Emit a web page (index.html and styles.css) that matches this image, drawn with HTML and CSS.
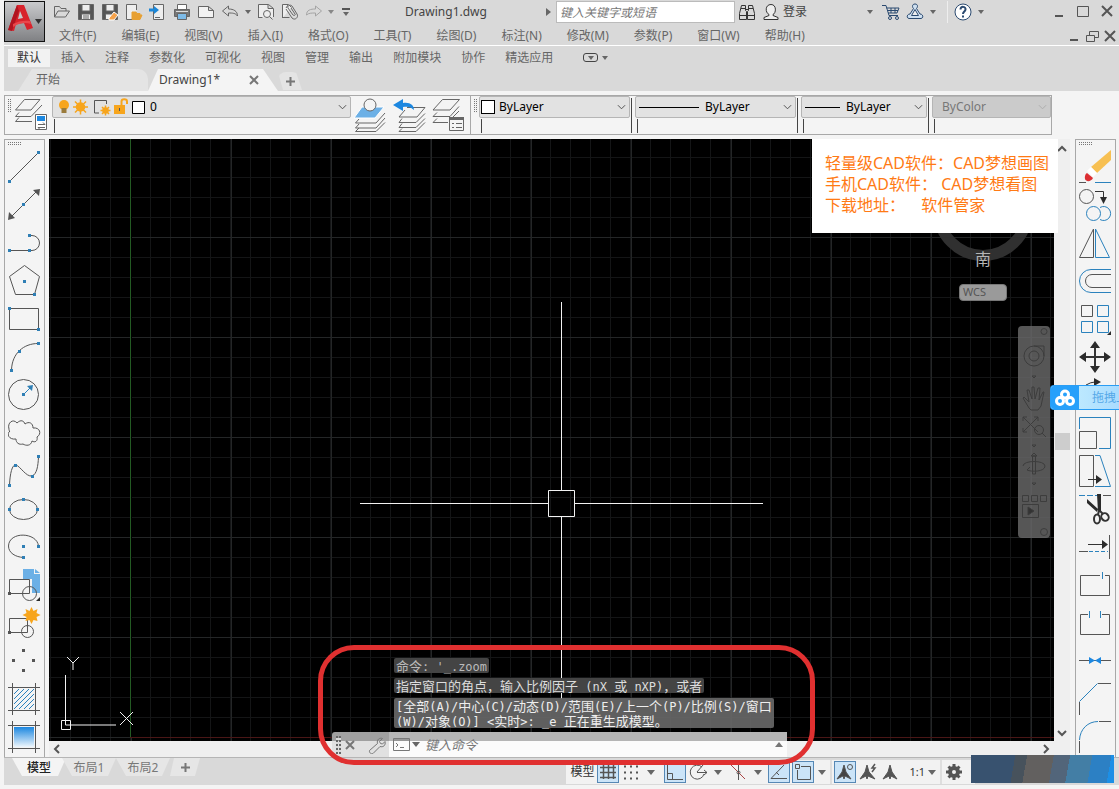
FILE: index.html
```html
<!DOCTYPE html>
<html lang="zh-CN">
<head>
<meta charset="utf-8">
<title>Drawing1.dwg</title>
<link rel="stylesheet" href="styles.css">
</head>
<body>
<div class="app">
  <header class="header">
    <button class="logo" aria-label="应用程序菜单">
      <svg width="39" height="39" viewBox="0 0 39 39"><path d="M3 28 12 3h7l9 23-6 2-3-7-8 1-2 7z" fill="#d8232c"/><path d="m13 17 2-8 3 7z" fill="#c9cacc"/><path d="M3 28 12 3l2 6-7 20z" fill="#b01520"/><path d="M8 22c5-3 12-4 17-3l1 3c-6-2-12-1-18 3z" fill="#e9474b"/><path d="M30 17h7l-3.500 5z" fill="#333"/></svg>
    </button>
    <div class="header-rows">
      <div class="title-row">
        <button class="qa" aria-label="打开"><svg viewBox="0 0 24 24"><path d="M4.500 17V6.500h5l1.500 2h5V11M4.500 17l3.500-6h11.500l-4 6z"/></svg></button>
        <button class="qa" aria-label="保存"><svg viewBox="0 0 24 24"><path d="M4.500 4.500h15v15h-15z" fill="#555"/><path d="M8 4.500h8V11H8zM7.500 14h9v5.500h-9z" fill="#eee"/><path d="M9 16h6M9 18h6"/></svg></button>
        <button class="qa" aria-label="另存为"><svg viewBox="0 0 24 24"><path d="M4.500 4.500h15v15h-15z" fill="#555"/><path d="M8 4.500h8V11H8zM7.500 14h6v5.500h-6z" fill="#eee"/><path d="m11 18 5-6 4 3-4 5h-5z" fill="#f6a24a" stroke="#fff"/></svg></button>
        <button class="qa" aria-label="从移动设备打开"><svg viewBox="0 0 24 24"><path d="M14.500 10V4.500h-10v15h6" fill="#eee"/><path d="M10 18v-6h4l1 1.500h3V15h2l-2 4.500h-8z" fill="#e7a032" stroke="#e7a032"/></svg></button>
        <button class="qa" aria-label="保存到移动设备"><svg viewBox="0 0 24 24"><path d="M7.500 4.500h10v15h-10z" fill="#eee"/><path d="M3 8.500h5V6l5 4-5 4v-2.500H3z" fill="#1c87d8" stroke="none"/><path d="M9 17.500h5"/></svg></button>
        <button class="qa" aria-label="打印"><svg viewBox="0 0 24 24"><path d="M7.500 4.500h9v5h-9z" fill="#fff"/><path d="M4.500 9.500h15v7h-15z" fill="#777"/><path d="M6 11.500h12" stroke="#ddd"/><path d="M7.500 13.500h9v6h-9z" fill="#7dbbe8"/></svg></button>
        <button class="qa" aria-label="新建"><svg viewBox="0 0 24 24"><path d="M4.500 6.500h10l5 4v7h-15zM14.500 6.500v4h5" fill="#f2f2f2"/></svg></button>
        <button class="qa" aria-label="放弃"><svg viewBox="0 0 24 24"><path d="m4.500 11 6-5v3c5 0 9 2 9 7-2-3-5-3-9-3v3z"/></svg></button>
        <i class="caret"></i>
        <button class="qa" aria-label="打印预览"><svg viewBox="0 0 24 24"><path d="M4.500 18V4.500h10l5 4V17M4.500 17.500h4M14 4.500v4h5" fill="#eee"/><circle cx="13" cy="14" r="3.500"/><path d="m15.500 16.500 3 3"/></svg></button>
        <button class="qa" aria-label="修订"><svg viewBox="0 0 24 24"><path d="M4.500 18V4.500h6l3 3M4.500 17.500h7M10 5l-2 3" fill="#eee"/><path d="m8 9 6 9c3 3 7-1 5-4l-5-8c-2-2-5 0-4 2l5 7c1 1 3 0 2-1l-4-6"/></svg></button>
        <button class="qa faded" aria-label="重做"><svg viewBox="0 0 24 24"><path d="m19.500 11-6-5v3c-5 0-9 1-9 6 2-2 5-2 9-2v3z"/></svg></button>
        <i class="caret pale"></i>
        <button class="more" aria-label="自定义"><span></span><i class="caret"></i></button>
        <h1 class="title">Drawing1.dwg</h1>
        <i class="play"></i>
        <input class="search" type="text" aria-label="搜索" placeholder="键入关键字或短语">
        <button class="qa" aria-label="查找"><svg viewBox="0 0 24 24" class="dark"><path d="M6.500 5.500h4v5l1 1v8h-7v-6zM17.500 5.500h-4v5l-1 1v8h7v-6zM4.500 15.500h7M12.500 15.500h7M10.500 9.500h3M6 8.500h4M14 8.500h4"/></svg></button>
        <button class="login"><svg viewBox="0 0 24 24" class="dark"><path d="M12 4.500c6 0 5 9 2 10v1l5 2v2H5v-2l5-2v-1c-4-2-4-10 2-10z" fill="#eee"/></svg>登录</button>
        <i class="caret login-caret"></i>
        <button class="qa" aria-label="商店"><svg viewBox="0 0 24 24" class="navy"><path d="M3 5.500h4l3 10h9M7.500 8H20l-2 5H9M8 10.500h11M12 8v5M16 8v5"/><circle cx="11" cy="18" r="1.500"/><circle cx="18" cy="18" r="1.500"/></svg></button>
        <button class="qa" aria-label="应用"><svg viewBox="0 0 24 24" class="navy"><path d="M12 4c3 0 3 3 1.500 4.500L17 14c3 0 4 4 1 4.500H6c-3-.5-2-4.500 1-4.500l3.500-5.500C9 7 9 4 12 4z" fill="#cfe0f0"/><path d="m12 9.500 3.500 6h-7z" fill="#eee"/></svg></button>
        <i class="caret"></i>
        <span class="divider"></span>
        <button class="qa" aria-label="帮助"><svg viewBox="0 0 24 24" class="navy"><circle cx="12" cy="12" r="8" fill="#fff"/><path d="M9.500 9.500c0-4 5.500-3 5 0-.3 2-2.500 2-2.500 4.500M12 15.500v2" stroke-width="2"/></svg></button>
        <i class="caret"></i>
        <div class="window-buttons">
          <button aria-label="最小化"><svg viewBox="0 0 24 24"><path d="M8 16h8" stroke-width="2"/></svg></button>
          <button aria-label="最大化"><svg viewBox="0 0 24 24"><path d="M6.500 6.500h11v10h-11z"/></svg></button>
          <button aria-label="关闭"><svg viewBox="0 0 24 24"><path d="m7 6 10 10M17 6 7 16" stroke-width="2"/></svg></button>
        </div>
      </div>
      <nav class="menu-row">
        <a href="#">文件(F)</a><a href="#">编辑(E)</a><a href="#">视图(V)</a><a href="#">插入(I)</a><a href="#">格式(O)</a><a href="#">工具(T)</a><a href="#">绘图(D)</a><a href="#">标注(N)</a><a href="#">修改(M)</a><a href="#">参数(P)</a><a href="#">窗口(W)</a><a href="#">帮助(H)</a>
        <div class="doc-buttons">
          <button aria-label="最小化图形"><svg viewBox="0 0 18 20"><path d="M5 14h8" stroke-width="2"/></svg></button>
          <button aria-label="还原图形"><svg viewBox="0 0 18 20"><path d="M6.500 9V5.500h9v6H12M3.500 9.500h8v6h-8z"/></svg></button>
          <button aria-label="关闭图形"><svg viewBox="0 0 18 20"><path d="m4 5 10 10M14 5 4 15" stroke-width="2"/></svg></button>
        </div>
      </nav>
    </div>
  </header>

  <nav class="ribbon">
    <button class="active">默认</button><button>插入</button><button>注释</button><button>参数化</button><button>可视化</button><button>视图</button><button>管理</button><button>输出</button><button>附加模块</button><button>协作</button><button>精选应用</button>
    <button class="collapse" aria-label="最小化功能区"><span class="pill"><i class="caret"></i></span><i class="caret"></i></button>
  </nav>

  <div class="file-tabs">
    <button class="file-tab start">开始</button>
    <button class="file-tab current">Drawing1*<svg width="10" height="10" viewBox="0 0 10 10"><path d="m1 1 8 8M9 1 1 9" stroke="#777" stroke-width="2"/></svg></button>
    <button class="file-tab add" aria-label="新图形"><svg width="9" height="9" viewBox="0 0 9 9"><path d="M4.500 0v9M0 4.500h9" stroke="#777" stroke-width="2"/></svg></button>
  </div>

  <div class="toolbars">
    <section class="toolbar layers">
      <i class="grip-v"></i>
      <button class="layer-btn first" aria-label="图层特性"><svg viewBox="0 0 34 38"><path d="M10.500 3.500H26L17 14H1.500zM5 16.500l-3.500 4H17L28 9M5 21.500l-3.500 4H18"/><path d="M21.500 18.500h11v15h-11z" fill="#fff"/><path d="M23 20h8v5h-8z" fill="#1c87e0" stroke="none"/><path d="M24 28.500h7l-2-2M31 31.500h-7l2 2"/></svg></button>
      <label class="combo layer-combo">
        <svg class="layer-icons" viewBox="0 0 94 22"><circle cx="11" cy="9" r="5" fill="#f7a51c"/><path d="M8.500 12h5v5h-5z" fill="#9a7b3c"/><g stroke="#f7a51c" stroke-width="1.500"><circle cx="27.500" cy="11" r="4" fill="#f7a51c"/><path d="M27.500 3.500v15M20 11h15M22 5.500l11 11M33 5.500l-11 11"/></g><path d="M41.500 8V4.500H45M41.500 12v5H46M50 4.500h3.500V8M44 4.500h6M41.500 8v5" fill="none" stroke="#555"/><g stroke="#f7a51c" stroke-width="1.500"><circle cx="52.500" cy="14.500" r="2.500" fill="#f7a51c"/><path d="M52.500 9.500v10M47.500 14.500h10M49 11l7 7M56 11l-7 7"/></g><path d="M61 9h11v9H61z" fill="#f7a51c"/><path d="M68.500 9V5.500c0-3 5.500-3 5.500 0V8" fill="none" stroke="#f7a51c" stroke-width="2"/><path d="M66.500 12v3" stroke="#555"/><path d="M79.500 5.500h12v12h-12z" fill="#fff" stroke="#000"/></svg>
        <select aria-label="图层"><option>0</option></select>
        <svg class="chev" viewBox="0 0 10 6"><path d="m1 1 4 4 4-4"/></svg>
      </label>
      <button class="layer-btn" aria-label="置为当前"><svg viewBox="0 0 34 38"><path d="M9 11h22l-9 11H1z" fill="#6cb0e6" stroke="#fff"/><circle cx="17" cy="9" r="6" fill="#f4f4f4"/><path d="m6 23-3.500 4H23l9-10M6 28l-3.500 4H23l9-10M6 32l-3.500 3.500H23l9-9"/></svg></button>
      <button class="layer-btn" aria-label="上一个图层"><svg viewBox="0 0 34 38"><path d="M15 11.500h18L25 21H7l6-7M10 22.500l-3 4h17l9-9M10 27.500l-3 4h17l9-9M10 32.500l-3 3h17l9-9"/><path d="m1 9 10-6v4c7-1 11 2 11 7-3-3-6-4-11-3v4z" fill="#1c87e0" stroke="none"/></svg></button>
      <button class="layer-btn" aria-label="图层状态"><svg viewBox="0 0 34 38"><path d="M11.500 3.500h17L19 14H2zM6 16.500l-4 4h17l9-10M6 22.500l-4 4h15M28 15l-6 6"/><path d="M18.500 21.500h14v13h-14z" fill="#f4f4f4"/><path d="M18 22.500h15" stroke-width="3"/><path d="M21 27.500h2M25 27.500h6M21 31.500h2M25 31.500h6"/></svg></button>
    </section>
    <section class="toolbar props">
      <i class="grip-v"></i>
      <label class="combo color"><i class="swatch"></i><select aria-label="颜色"><option>ByLayer</option></select><svg class="chev" viewBox="0 0 10 6"><path d="m1 1 4 4 4-4"/></svg></label>
      <i class="bar"></i>
      <label class="combo linetype"><i class="stroke long"></i><select aria-label="线型"><option>ByLayer</option></select><svg class="chev" viewBox="0 0 10 6"><path d="m1 1 4 4 4-4"/></svg></label>
      <i class="bar"></i>
      <label class="combo weight"><i class="stroke"></i><select aria-label="线宽"><option>ByLayer</option></select><svg class="chev" viewBox="0 0 10 6"><path d="m1 1 4 4 4-4"/></svg></label>
      <i class="bar"></i>
      <label class="combo plot disabled"><select aria-label="打印样式" disabled><option>ByColor</option></select><svg class="chev" viewBox="0 0 10 6"><path d="m1 1 4 4 4-4"/></svg></label>
    </section>
  </div>

  <main class="main">
    <aside class="palette">
      <i class="grip-h"></i>
      <button aria-label="直线"><svg viewBox="0 0 33 38"><path d="M2 33 30 5"/><path class="pt" d="M0 32h3v3H0zM29 3h3v3h-3z"/></svg></button>
      <button aria-label="构造线"><svg viewBox="0 0 33 38"><path d="M3 31 28 6"/><path class="solid" d="m0 34 1-8 6 6zM32 3l-1 7-6-6z"/><path class="pt" d="M14 17h3v3h-3z"/></svg></button>
      <button aria-label="多段线"><svg viewBox="0 0 33 38"><path d="M2 26.500h22a7.500 7.500 0 0 0 0-15h-3"/><path class="pt" d="M0 25h3v3H0zM20 25h3v3h-3zM20 10h3v3h-3z"/></svg></button>
      <button aria-label="多边形"><svg viewBox="0 0 33 38"><path d="m16.500 3.500 15 11-5 18h-19l-6-18z"/><path class="pt" d="M15 18h3v3h-3zM25 31h3v3h-3z"/></svg></button>
      <button aria-label="矩形"><svg viewBox="0 0 33 38"><path d="M1.500 8.500h29v21h-29z"/><path class="pt" d="M0 7h3v3H0zM29 28h3v3h-3z"/></svg></button>
      <button aria-label="圆弧"><svg viewBox="0 0 33 38"><path d="M30 5.500C16 5.500 4 15 3.500 32"/><path class="pt" d="M29 4h3v3h-3zM10 12h3v3h-3zM2 31h3v3H2z"/></svg></button>
      <button aria-label="圆"><svg viewBox="0 0 33 38"><circle cx="15.500" cy="18.500" r="15"/><path d="m15 19 8-8" class="blue"/><path class="pt" d="M14 17h3v3h-3zM25 9l-1 6-5-5z"/></svg></button>
      <button aria-label="修订云线"><svg viewBox="0 0 33 38"><path d="M1 15C-1 9 5 4 9 9c4-4 7-2 8 1 4-3 8-1 8 4 7-1 9 6 4 9 1 4-2 6-5 4-1 5-6 5-9 3-4 1-7-1-7-5-7 1-10-5-6-8-1 0-1-1-1-2z"/></svg></button>
      <button aria-label="样条曲线"><svg viewBox="0 0 33 38"><path d="M1.500 33C2 22 4 12 8 13s10 12 16 11c5-2 6-10 6.500-19"/><path class="pt" d="M0 32h3v3H0zM6 12h3v3H6zM23 23h3v3h-3zM29 3h3v3h-3z"/></svg></button>
      <button aria-label="椭圆"><svg viewBox="0 0 33 38"><ellipse cx="15.500" cy="19.500" rx="14" ry="10"/><path class="pt" d="M14 8h3v3h-3zM0 18h3v3H0zM28 18h3v3h-3z"/></svg></button>
      <button aria-label="椭圆弧"><svg viewBox="0 0 33 38"><path d="M30.500 18C29 4 1 3 .5 18c0 7 7 11 15 11.500"/><path class="pt" d="M14 17h3v3h-3zM29 17h3v3h-3zM14 28h3v3h-3z"/></svg></button>
      <button aria-label="插入块"><svg viewBox="0 0 33 38"><path d="M15 3h11v5h6v19h-8V13h-9z" fill="#6cb0e6" stroke="none"/><path d="M27 3v4h5z" fill="#6cb0e6" stroke="none"/><path d="M1.500 13.500h20v14h-20z"/><circle cx="21.500" cy="27.500" r="7"/><path class="ink" d="M32 31v4h-4z"/><path class="solid" d="M0 26h3v3H0z"/></svg></button>
      <button aria-label="创建块"><svg viewBox="0 0 33 38"><path d="M1.500 14.500h18v14h-18z"/><circle cx="19.500" cy="27.500" r="6"/><path d="m23.500 3 2 4 4-2-1 4 4 2-4 2 1 4-4-1-2 4-2-4-4 1 1-4-4-2 4-2-1-4 4 2z" fill="#f7a51c" stroke="none"/><path class="solid" d="M0 27h3v3H0z"/></svg></button>
      <button aria-label="点"><svg viewBox="0 0 33 38"><path class="solid" d="M14 7h3v3h-3zM4 17h3v3H4zM24 17h3v3h-3zM14 27h3v3h-3z"/></svg></button>
      <button aria-label="图案填充"><svg viewBox="0 0 33 38"><path d="M4.500 3v32M27.500 3v32M0 7.500h32M0 30.500h32"/><path class="blue" d="m6 14 5-5M6 19 16 9M6 24 21 9M6 29 26 9M11 29l15-15M16 29l10-10M21 29l5-5"/></svg></button>
      <button aria-label="渐变色"><svg viewBox="0 0 33 38"><defs><linearGradient id="sky" x2="0" y2="1"><stop stop-color="#1c87e0"/><stop offset="1" stop-color="#eef6fc"/></linearGradient></defs><path d="M6 9h20v20H6z" fill="url(#sky)" stroke="none"/><path d="M4.500 3v32M27.500 3v32M0 7.500h32M0 30.500h32"/></svg></button>
    </aside>

    <div class="viewport">
      <div class="canvas">
        <div class="axis-y"></div>
        <div class="axis-x"></div>
        <svg class="crosshair" width="404" height="397" viewBox="0 0 404 397"><path d="M201.500 0v188M201.500 215v182M0 201.500h188M215 201.500h188M188.500 188.500h26v26h-26z"/></svg>
        <svg class="ucs" width="76" height="78" viewBox="0 0 76 78"><path d="M4.500 19v50H55M.5 64.500h9v9h-9z"/><path d="m6 1 6 6 6-6M12 7v7M59 56l13 13M72 56 59 69"/></svg>
        <div class="compass"><svg width="104" height="104" viewBox="0 0 104 104"><circle cx="52" cy="52" r="44.500"/></svg></div>
        <div class="south">南</div>
        <button class="wcs">WCS</button>
        <div class="navbar"><svg viewBox="0 0 32 212"><circle cx="26" cy="5.500" r="3"/><circle cx="16" cy="30" r="10"/><circle cx="16" cy="30" r="5"/><path d="M16 20h10v10M14 50h4l-2 2zM11 82l-6-10 1-1 5 5-2-12h2l3 9V61h2l1 12 3-11h2l-1 12 4-8h1l-3 14-3 4h-7zM5 91l15 15M20 91 5 106M5 95v-4h4M16 91h4v4M5 102v4h4M14 119h4l-2 2z"/><circle cx="21" cy="104" r="4.500"/><path d="m24 107 4 4M14.500 130h3v18h-3zM5 140c0-6 22-6 22 0s-14 6-18 4l3-3M16 127l3 3h-6zM14 157h4l-2 2zM4.500 169.500h6v6h-6zM13.500 169.500h6v6h-6zM22.500 169.500h6v6h-6zM4.500 178.500h16v13h-16z"/><path d="m10 181 6 4-6 4z" fill="#333"/><circle cx="26" cy="206" r="3.500"/></svg></div>
        <div class="history">
          <p class="h1">命令<span>: '_.zoom</span></p>
          <p class="h2">指定窗口的角点，输入比例因子<span> (nX </span>或<span> nXP)</span>，或者</p>
          <p class="h3"><span>[</span>全部<span>(A)/</span>中心<span>(C)/</span>动态<span>(D)/</span>范围<span>(E)/</span>上一个<span>(P)/</span>比例<span>(S)/</span>窗口<br><span>(W)/</span>对象<span>(O)] &lt;</span>实时<span>&gt;: _e </span>正在重生成模型。</p>
        </div>
      </div>
      <div class="scroll-v"><svg viewBox="0 0 10 8"><path d="m1 6 4-4 4 4"/></svg><i class="thumb"></i><svg viewBox="0 0 10 8"><path d="m1 2 4 4 4-4"/></svg></div>
      <div class="scroll-h"><svg viewBox="0 0 8 10"><path d="M6 1 2 5l4 4"/></svg><svg viewBox="0 0 8 10"><path d="m2 1 4 4-4 4"/></svg></div>
      <div class="notice">
        <p>轻量级CAD软件：CAD梦想画图</p>
        <p>手机CAD软件： CAD梦想看图</p>
        <p>下载地址：　&nbsp;&nbsp;软件管家</p>
      </div>
      <div class="command">
        <i class="grip-v"></i>
        <button aria-label="关闭命令行"><svg width="12" height="12" viewBox="0 0 12 12"><path d="m2 2 8 8M10 2l-8 8" stroke-width="2"/></svg></button>
        <button aria-label="自定义"><svg width="18" height="18" viewBox="0 0 18 18"><path d="m1.500 14.500 8-7c-1-4 2-6 5-5l-3 3 1 2 2 .500 2.500-2.500c1 4-2 6-5 5l-7 7c-2 1-4-1-3.500-3z"/></svg></button>
        <label class="prompt"><svg width="17" height="13" viewBox="0 0 17 13"><path d="M.5.500h16v12H.5zM.5 2h16M3 5l2 2-2 2M7 9.500h4"/></svg><i class="caret"></i><input type="text" aria-label="命令" placeholder="键入命令"></label>
        <i class="up"></i>
      </div>
      <div class="highlight"></div>
    </div>

    <aside class="palette modify">
      <i class="grip-h"></i>
      <button aria-label="删除"><svg viewBox="0 0 33 38"><path d="M32 2v10L18 25l-6-6z" fill="#f7c052" stroke="none"/><path d="m12 19 6 6-4 4-6-6z" fill="#fff" stroke="none"/><path d="m8 25 6 5c-2 4-7 4-8 1-.5-2 0-5 2-6z" fill="#dc2f33" stroke="none"/><path d="M0 34.500h7"/><path class="blue" d="M16 34.500h16"/></svg></button>
      <button aria-label="复制"><svg viewBox="0 0 33 38"><circle cx="7.500" cy="10.500" r="7"/><path class="dark" d="M16 5.500h8.500V12"/><path class="ink" d="M21 11h7l-3.500 7z"/><circle class="blue" cx="14.500" cy="27.500" r="7"/><path class="blue" d="M21 21.500a7 7 0 1 1 0 12"/></svg></button>
      <button aria-label="镜像"><svg viewBox="0 0 33 38"><path d="M14.500 5v28.500H.5z"/><path class="blue" d="M16.500 5v28.500h14z"/></svg></button>
      <button aria-label="偏移"><svg viewBox="0 0 33 38"><path class="blue" d="M32 7.500H12a11.500 11.500 0 0 0 0 23h20"/><path d="M32 12.500H13a6.500 6.500 0 0 0 0 13h19"/></svg></button>
      <button aria-label="阵列"><svg viewBox="0 0 33 38"><path d="M2.500 5.500h11v11h-11z"/><path class="blue" d="M18.500 5.500h11v11h-11zM2.500 21.500h11v11h-11zM18.500 21.500h11v11h-11z"/><path class="ink" d="M32 31v4h-4z"/></svg></button>
      <button aria-label="移动"><svg viewBox="0 0 33 38"><path d="M2 19h28M16 5v28" stroke="#333" stroke-width="2"/><path class="ink" d="m16 3 5 7H11zM16 35l5-7H11zM0 19l7-5v10zM32 19l-7-5v10z"/></svg></button>
      <button aria-label="旋转"><svg viewBox="0 0 33 38"><path class="dark" d="M7 9q5-3 9-3"/><path class="ink" d="m15 2 7 4-7 4z"/></svg></button>
      <button aria-label="缩放"><svg viewBox="0 0 33 38"><path class="blue" d="M.5 15V3.500h31v31H20"/><path d="M.5 17.500h17v17H.5z"/></svg></button>
      <button aria-label="拉伸"><svg viewBox="0 0 33 38"><path d="M.5 3.500h14v31H.5z"/><path class="blue" d="M16 3.500h5l10.500 31H16"/><path class="dark" d="M9 27.500h11"/><path class="ink" d="m17 23 6 4.500-6 4.500z"/></svg></button>
      <button aria-label="修剪"><svg viewBox="0 0 33 38"><path class="blue" d="M0 5.500h22" stroke-dasharray="6 2"/><path d="M24 5.500h8"/><path class="ink" d="m8 9 11 10-1 3-10-9zM18 4h4v18h-3z"/><g stroke="#333" stroke-width="2"><ellipse cx="18" cy="29" rx="3" ry="4.500"/><ellipse cx="26" cy="27" rx="3.500" ry="4" transform="rotate(-40 26 27)"/><path d="m20 20-1 5M21 21l3 3"/></g></svg></button>
      <button aria-label="延伸"><svg viewBox="0 0 33 38"><path class="dark" d="M9 16.500h15"/><path class="ink" d="m23 12 6 4.500-6 4.500z"/><path d="M30.500 7v24M0 23.500h9"/><path class="blue" d="M10 23.500h19" stroke-dasharray="4 2"/></svg></button>
      <button aria-label="打断于点"><svg viewBox="0 0 33 38"><path d="M21 9.500H1.500v20h29v-20H26"/><path class="blue" d="M23.500 6v7"/></svg></button>
      <button aria-label="打断"><svg viewBox="0 0 33 38"><path d="M9 10.500H1.500v20h29v-20H23"/><path class="blue" d="M10.500 7v7M21.500 7v7"/></svg></button>
      <button aria-label="合并"><svg viewBox="0 0 33 38"><path d="M0 18.500h32"/><path d="m10 15 6 3.500-6 3.500zM22 15l-6 3.500 6 3.500z" fill="#1c87e0" stroke="none"/></svg></button>
      <button aria-label="倒角"><svg viewBox="0 0 33 38"><path d="M.5 35V22M19 3.500h13"/><path class="blue" d="m.5 21.500 18-18"/></svg></button>
      <button aria-label="圆角"><svg viewBox="0 0 33 38"><path d="M.5 35V23M20 3.500h12"/><path class="blue" d="M.5 22C1 11 9 3.500 19 3.500"/></svg></button>
    </aside>
    <div class="drag-tip"><span class="drag-icon"><svg width="20" height="18" viewBox="0 0 20 18"><circle cx="10" cy="5.500" r="3.500"/><circle cx="5" cy="12" r="3.500"/><circle cx="15" cy="12" r="3.500"/></svg></span><span class="drag-text">拖拽上传</span></div>
  </main>

  <footer class="status">
    <div class="layouts"><button class="active">模型</button><button>布局1</button><button>布局2</button><button class="plus" aria-label="新建布局"><svg width="9" height="9" viewBox="0 0 9 9"><path d="M4.500 0v9M0 4.500h9" stroke="#777" stroke-width="2"/></svg></button></div>
    <div class="toggles">
      <button class="space">模型</button>
      <button class="on" aria-label="栅格"><svg viewBox="0 0 22 22"><path d="M6.500 4v14M11.500 4v14M16.500 4v14M3 6.500h16M3 11.500h16M3 16.500h16" stroke-width="1.500"/></svg></button>
      <button aria-label="捕捉"><svg viewBox="0 0 22 22"><path d="M4 5.500h2m4 0h2m4 0h2M4 11.500h2m4 0h2m4 0h2M4 17.500h2m4 0h2m4 0h2" stroke-width="2"/></svg></button><i class="caret big"></i>
      <button class="on gap-left" aria-label="正交"><svg viewBox="0 0 22 22"><path d="M3.500 3v15.500H19M3.500 12.500h5v6"/></svg></button>
      <button aria-label="极轴"><svg viewBox="0 0 22 22"><path d="M15 6a7 7 0 1 0 2 7M10 11.500h10M10 11l6-7M17 9l3 2.500-3 2.500"/></svg></button><i class="caret big"></i>
      <button aria-label="等轴测"><svg viewBox="0 0 22 22"><path d="M11.500 3v16"/><path d="m4 4 14 14" stroke="#a44"/><circle cx="11.500" cy="11.500" r="1.500"/></svg></button><i class="caret big"></i>
      <button class="on" aria-label="对象追踪"><svg viewBox="0 0 22 22"><path d="M19 17.500H3L16 4M8 11l3 3"/></svg></button>
      <button class="on" aria-label="对象捕捉"><svg viewBox="0 0 22 22"><path d="M3.500 3.500h4v4h-4zM9 5.500h9.500v13h-13V9"/></svg></button><i class="caret big tight"></i>
      <span class="sep"></span>
      <button class="on" aria-label="注释可见性"><svg viewBox="0 0 22 22"><path d="m10 4 2 7 5 7-6-3-1 3-1-3-6 3 5-7z" fill="#444"/><circle cx="16" cy="6" r="2.500"/></svg></button>
      <button aria-label="自动缩放"><svg viewBox="0 0 22 22"><path d="m10 4 2 7 6 7-7-3-1 3-1-3-6 3 5-7z" fill="#555"/><path d="m18 3-3 4h3l-3 4" stroke-width="1.500"/></svg></button>
      <button aria-label="注释比例"><svg viewBox="0 0 22 22"><path d="m11 4 2 7 5 7-6-3-1 3-1-3-6 3 5-7z" fill="#555"/></svg></button>
      <button class="scale">1:1</button><i class="caret big tight"></i>
      <span class="sep"></span>
      <button aria-label="设置"><svg viewBox="0 0 22 22"><circle cx="11" cy="11" r="4" stroke-width="4"/><path d="M11 3v3M11 16v3M3 11h3M16 11h3M5.500 5.500l2 2M14.500 14.500l2 2M16.500 5.500l-2 2M7.500 14.500l-2 2" stroke-width="3"/></svg></button>
    </div>
    <div class="mosaic"></div>
  </footer>
</div>
</body>
</html>
```

FILE: styles.css
```css
* { box-sizing: border-box; }
body {
  margin: 0;
  background: #f4f4f4;
  color: #555;
  font: 12px/16px "Noto Sans", "Noto Sans CJK SC", sans-serif;
}
button, input, select { font: inherit; color: inherit; }
button { border: 0; padding: 0; background: none; }
a { color: inherit; text-decoration: none; }
p, h1 { margin: 0; font-weight: normal; }
svg { display: block; fill: none; stroke: #666; flex: none; }
i { display: block; flex: none; }

.app {
  min-height: 100vh;
  display: flex;
  flex-direction: column;
  padding: 0 0 4px 4px;
  overflow: hidden;
}

.caret {
  width: 0;
  height: 0;
  border: 3px solid transparent;
  border-top: 4px solid #666;
  border-bottom: 0;
}
.caret.pale { border-top-color: #888; }
.caret.big { border-width: 5px 4px 0; margin: 0 5px; }
.caret.tight { margin: 0 3px; }

/* Title and menus */
.header {
  height: 45px;
  display: flex;
  background: #d9d9d9;
}
.logo {
  width: 41px;
  height: 41px;
  margin-top: 1px;
  border: 1px solid #111;
  background: linear-gradient(#c9cacc, #808184);
}
.logo svg { stroke: none; }
.header-rows { flex: 1; min-width: 0; }
.title-row { display: flex; align-items: center; height: 24px; padding-left: 5px; }
.qa svg, .login svg, .window-buttons svg { width: 24px; height: 24px; }
.qa.faded { opacity: 0.45; }
svg.dark { stroke: #333; }
svg.navy { stroke: #2b4a70; }
.more { margin-left: 4px; width: 10px; display: grid; justify-items: center; gap: 2px; }
.more span { width: 8px; height: 2px; background: #555; }
.title-row > .caret { margin: 0 3px; }
.title-row > .caret.pale { margin-left: 2px; }
.title { width: 190px; text-align: center; color: #444; font-size: 12px; }
.play { border: 4px solid transparent; border-left: 5px solid #666; border-right: 0; margin: 0 5px 0 5px; }
.search {
  width: 179px;
  height: 22px;
  padding: 0 3px;
  border: 1px solid #bbb;
  background: #fff;
}
.search::placeholder { color: #777; font-style: italic; opacity: 1; }
.login { display: flex; align-items: center; color: #444; }
.title-row > .login-caret { margin-left: 60px; }
.title-row > .login-caret + .qa { margin-left: 3px; }
.divider { width: 1px; height: 22px; background: #eee; margin: 0 3px 0 8px; }
.window-buttons { display: flex; margin-left: auto; }
.window-buttons svg, .doc-buttons svg { stroke: #555; }
.menu-row { display: flex; gap: 25px; align-items: center; height: 21px; padding: 2px 0 0 14px; color: #666; }
.doc-buttons { display: flex; margin-left: auto; }
.doc-buttons svg { width: 18px; height: 20px; }

/* Ribbon */
.ribbon {
  display: flex;
  align-items: center;
  height: 24px;
  padding: 2px 0 2px 4px;
  border-top: 1px solid #fff;
  background: #d9d9d9;
  color: #666;
}
.ribbon button { padding: 0 10px; height: 18px; line-height: 18px; }
.ribbon button:first-child { padding: 0 9px; margin-right: 1px; }
.ribbon .active { background: #f2f2f2; color: #333; }
.ribbon .collapse { display: flex; align-items: center; gap: 4px; padding: 0 20px; }
.pill { width: 15px; height: 9px; border: 1px solid #444; border-radius: 3px; display: grid; place-items: center; }

/* File tabs */
.file-tabs { display: flex; height: 22px; background: #d9d9d9; }
.file-tab {
  position: relative;
  z-index: 0;
  display: flex;
  align-items: center;
  color: #666;
}
.file-tab::before {
  content: "";
  position: absolute;
  z-index: -1;
  inset: 0;
  border-radius: 8px 10px 0 0;
  background: #e4e4e4;
}
.file-tab.start { width: 130px; margin-left: 14px; padding-left: 18px; }
.file-tab.start::before { clip-path: polygon(14px 0, 100% 0, 100% 100%, 0 100%); }
.file-tab.current { width: 130px; padding: 0 19px 0 11px; justify-content: space-between; color: #444; }
.file-tab.current::before { background: #f4f4f4; clip-path: polygon(10px 0, 115px 0, 100% 100%, 0 100%); }
.file-tab.add { width: 24px; height: 18px; margin-top: 3px; justify-content: center; }
.file-tab.add::before { clip-path: polygon(0 0, 18px 0, 100% 100%, 5px 100%); }

/* Toolbars */
.toolbars { display: flex; padding: 4px 0; }
.toolbar {
  display: flex;
  align-items: flex-start;
  height: 40px;
  border: 1px solid #a8a8a8;
}
.layers { width: 467px; }
.props { width: 582px; margin-left: -1px; }
.grip-v {
  width: 4px;
  height: 14px;
  margin: 3px 2px 0 3px;
  background:
    linear-gradient(transparent 50%, #f0f0f0 50%) 0 0 / 4px 2px,
    linear-gradient(90deg, #777 50%, transparent 50%) 0 0 / 2px 2px;
}
.layer-btn { margin-right: 5px; }
.layer-btn.first { margin-right: 4px; }
.layer-btn svg { width: 34px; height: 38px; }
.combo {
  position: relative;
  display: flex;
  align-items: center;
  height: 22px;
  padding: 0 3px;
  border: 1px solid #b5b5b5;
  border-radius: 2px;
  background: #e2e2e2;
  color: #000;
}
.combo::after {
  content: "";
  position: absolute;
  left: 1px;
  top: 22px;
  height: 14px;
  border-left: 1px solid #444;
}
.combo select {
  flex: 1;
  min-width: 0;
  padding: 0;
  border: 0;
  background: none;
  appearance: none;
  opacity: 1;
}
.chev { width: 9px; height: 6px; stroke: #444; }
.layer-combo { width: 300px; padding-left: 0; margin-right: 2px; }
.layer-icons { width: 94px; height: 22px; stroke: none; }
.layer-combo select { padding-left: 3px; }
.props .grip-v { margin: 3px 1px 0 3px; }
.color { width: 151px; padding-left: 1px; }
.swatch { width: 14px; height: 14px; margin-right: 4px; border: 1px solid #000; background: #fff; }
.bar { width: 1px; height: 35px; margin: 2px 3px 0 1px; background: #444; }
.stroke { width: 35px; margin: 0 6px 0 0; border-top: 1px solid #000; }
.stroke.long { width: 60px; }
.linetype { width: 161px; }
.weight { width: 126px; }
.plot { flex: 1; padding-left: 9px; }
.combo.disabled { background: #cbcbcb; color: #777; }
.disabled .chev { stroke: #aaa; }

/* Drawing area */
.main { position: relative; flex: 1; display: flex; }
.palette {
  width: 41px;
  padding-top: 2px;
  display: flex;
  flex-direction: column;
  align-items: center;
  border: 1px solid #a8a8a8;
  border-bottom: 0;
}
.palette svg { width: 33px; height: 38px; stroke: #555; }
.palette .blue { stroke: #2b82bd; }
.palette .dark { stroke: #333; }
.palette .pt { fill: #2f7fb5; stroke: none; }
.palette .solid { fill: #555; stroke: none; }
.palette .ink { fill: #2b2b2b; stroke: none; }
.grip-h {
  width: 14px;
  height: 4px;
  margin: 0 0 2px -20px;
  background:
    linear-gradient(transparent 50%, #f4f4f4 50%) 0 0 / 2px 2px,
    linear-gradient(90deg, #777 50%, transparent 50%) 0 0 / 2px 2px;
}
.modify { margin: 0 3px 0 5px; }
.viewport {
  position: relative;
  flex: 1;
  display: grid;
  grid-template: 1fr 16px / 1fr 16px;
  margin-left: 4px;
}
.canvas {
  position: relative;
  overflow: hidden;
  background:
    linear-gradient(90deg, #242627 1px, transparent 1px) 82px 0 / 100px 100px,
    linear-gradient(#242627 1px, transparent 1px) 0 98px / 100px 100px,
    linear-gradient(90deg, #141516 1px, transparent 1px) 1px 0 / 20px 20px,
    linear-gradient(#141516 1px, transparent 1px) 0 18px / 20px 20px,
    #000;
}
.axis-y { position: absolute; left: 81px; top: 0; bottom: 3px; width: 2px; background: linear-gradient(90deg, #235a23 1px, #000 1px); }
.axis-x { position: absolute; left: 81px; right: 0; bottom: 3px; border-top: 1px solid #4a1616; }
.crosshair { position: absolute; left: 311px; top: 163px; stroke: #f2f2f2; }
.ucs { position: absolute; left: 12px; bottom: 7px; stroke: #f2f2f2; }
.compass { position: absolute; right: 19px; top: 20px; }
.compass svg { stroke: #303030; stroke-width: 11; }
.south { position: absolute; right: 63px; top: 108px; color: #b5b5b5; font-size: 16px; line-height: 24px; }
.wcs {
  position: absolute;
  right: 47px;
  top: 145px;
  width: 48px;
  height: 17px;
  padding: 0 0 1px 3px;
  border: 1px solid #777;
  border-radius: 4px;
  background: #9a9a9a;
  color: #555;
  font-size: 11px;
  line-height: 14px;
  text-align: left;
}
.navbar {
  position: absolute;
  right: 4px;
  top: 187px;
  width: 32px;
  border-radius: 4px;
  background: rgba(105, 105, 105, 0.82);
}
.navbar svg { width: 32px; height: 212px; stroke: #3d3d3d; }
.history {
  position: absolute;
  left: 345px;
  bottom: 13px;
  display: grid;
  justify-items: start;
  gap: 5px;
  color: #eee;
  font: 13px/15px "Noto Sans CJK SC", sans-serif;
  white-space: nowrap;
}
.history p { padding: 0 2px; border-radius: 2px; background: rgba(105, 105, 105, 0.9); }
.history .h1 { background: #444; color: #bbb; }
.history .h2 { background: #444; color: #ddd; }
.history span { font: 12px/1px "DejaVu Sans Mono", monospace; white-space: pre; }
.scroll-v, .scroll-h {
  display: flex;
  align-items: center;
  justify-content: space-between;
  background: #efefef;
}
.scroll-v { flex-direction: column; padding: 6px 0 4px; }
.scroll-h { grid-column: 1 / 3; padding: 0 20px 0 4px; }
.scroll-v svg { width: 10px; height: 8px; stroke: #555; stroke-width: 2; }
.scroll-h svg { width: 8px; height: 10px; stroke: #555; stroke-width: 2; }
.thumb { width: 15px; height: 17px; background: #cdcdcd; }
.notice {
  position: absolute;
  top: 0;
  right: 12px;
  width: 246px;
  height: 94px;
  padding: 14px 0 0 13px;
  background: #fff;
  color: #ff7a14;
  font: 16px/21px "Noto Sans", "Noto Sans CJK SC", sans-serif;
  white-space: nowrap;
}
.command {
  position: absolute;
  left: 283px;
  bottom: 0;
  width: 455px;
  height: 25px;
  display: flex;
  align-items: center;
  gap: 12px;
  border-radius: 3px;
  background: linear-gradient(#a0a0a0 0 9px, #e1e1e1 9px);
}
.command svg { stroke: #777; }
.command .grip-v {
  width: 5px;
  height: 18px;
  margin: 0 -9px 0 4px;
  background:
    linear-gradient(transparent 50%, #dadada 50%) 0 0 / 5px 4px,
    linear-gradient(90deg, #666 66%, transparent 66%) 0 0 / 3px 4px;
}
.prompt {
  flex: 1;
  align-self: stretch;
  display: flex;
  align-items: center;
  gap: 2px;
  margin-left: -9px;
  padding-left: 4px;
  background: linear-gradient(#b5b5b5 0 9px, #fbfbfb 9px);
}
.prompt input { flex: 1; min-width: 0; border: 0; padding: 0 0 0 3px; background: none; font-size: 13px; }
.prompt input::placeholder { color: #777; opacity: 1; font-style: italic; }
.prompt .caret { border-width: 5px 4px 0; }
.up { border: 4px solid transparent; border-bottom: 5px solid #777; border-top: 0; margin: 0 4px 0 -24px; }
.highlight {
  position: absolute;
  left: 269px;
  bottom: -8px;
  width: 497px;
  height: 120px;
  border: 5px solid #e03030;
  border-radius: 36px;
  pointer-events: none;
  z-index: 2;
}
.drag-tip {
  position: absolute;
  right: 0;
  top: 246px;
  width: 69px;
  height: 25px;
  display: flex;
  overflow: hidden;
  border: 1px solid #2a9df4;
  border-right: 0;
  border-radius: 4px 0 0 4px;
  background: linear-gradient(90deg, #c9f1fe, #a9dcff);
}
.drag-icon { flex: none; width: 28px; display: grid; place-items: center; background: #26a0fb; }
.drag-icon svg { stroke: #fff; stroke-width: 3; }
.drag-text { padding-left: 13px; color: #55a8e8; font-size: 12px; line-height: 23px; white-space: nowrap; }

/* Status bar */
.status {
  position: relative;
  height: 28px;
  display: flex;
  border-top: 1px solid #b5b5b5;
  background: #d9d9d9;
}
.layouts { display: flex; height: 18px; padding-left: 8px; }
.layouts button {
  width: 54px;
  padding: 1px 0 0;
  background: #e6e6e6;
  clip-path: polygon(0 0, 100% 0, 46px 100%, 10px 100%);
  line-height: 16px;
  color: #777;
}
.layouts .active { margin-right: -4px; background: #f4f4f4; color: #222; font-weight: 500; }
.layouts .plus { width: 30px; clip-path: polygon(4px 0, 100% 0, 25px 100%, 0 100%); display: grid; place-items: center; }
.toggles {
  display: flex;
  align-items: center;
  height: 24px;
  margin: 2px 144px 0 auto;
  padding: 0 10px 0 4px;
  background: #f2f2f2;
  color: #333;
}
.toggles svg { width: 22px; height: 22px; stroke: #555; }
.toggles .on { background: #cbe4f8; box-shadow: inset 0 0 0 1px #5688b5; margin: 0 1px; }
.toggles .space { margin-right: 2px; }
.toggles .gap-left { margin-left: 4px; }
.toggles .scale { padding-left: 8px; font-size: 11px; }
.sep { width: 2px; height: 24px; margin: 0 1px; background: #dedede; }
.mosaic {
  position: absolute;
  right: 5px;
  bottom: 2px;
  width: 143px;
  height: 28px;
  background: linear-gradient(100deg, #38526f 0 30%, #47525c 30% 38%, #62605f 38% 56%, #52657a 56% 67%, #437ea5 67% 82%, #2c80c4 82% 95%, #1c8fe6 95%);
}
```
